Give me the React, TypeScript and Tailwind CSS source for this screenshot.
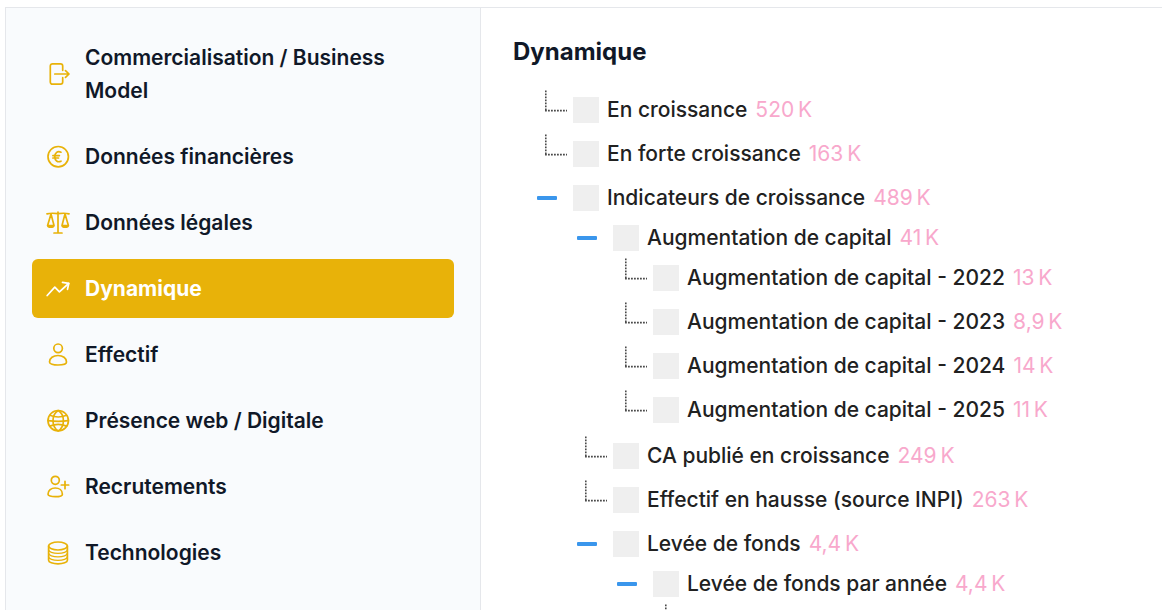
import React, { useState, ReactNode } from 'react';

interface Category {
  id: string;
  label: string;
  icon: ReactNode;
}

interface TreeItem {
  id: string;
  label: string;
  count: string;
  children?: TreeItem[];
  truncated?: boolean;
}

const Icon = ({ children }: { children: ReactNode }) => (
  <svg
    viewBox="0 0.5 24 24"
    className="size-6 shrink-0"
    fill="none"
    stroke="currentColor"
    strokeWidth="1.7"
    strokeLinecap="round"
    strokeLinejoin="round"
    aria-hidden="true"
  >
    {children}
  </svg>
);

const categories: Category[] = [
  {
    id: 'business',
    label: 'Commercialisation / Business Model',
    icon: (
      <Icon>
        <path d="M16.7 8.8V4.500a2.2 2.2 0 0 0-2.2-2.2h-8a2.2 2.2 0 0 0-2.2 2.2v16a2.2 2.2 0 0 0 2.2 2.2h8a2.2 2.2 0 0 0 2.2-2.2v-4.3" />
        <path d="M8.800 12.500h14M19.500 9.200l3.500 3.300-3.500 3.300" />
      </Icon>
    ),
  },
  {
    id: 'finance',
    label: 'Données financières',
    icon: (
      <Icon>
        <circle cx="12.2" cy="12.2" r="10.2" />
        <path d="M15 7.7c-3.400-1.600-6.200.5-6.200 4.500s2.800 6.100 6.200 4.500M6.900 11.100h6.500M6.900 13.500h5.600" />
      </Icon>
    ),
  },
  {
    id: 'legal',
    label: 'Données légales',
    icon: (
      <Icon>
        <path d="M12 1.500v20.500M8 22.500h8M1 3.400c3-.8 6-.9 11-.2 5-.7 8-.6 11 .2" />
        <path d="M5 3.400 1.600 15M5 3.400 8 15M1.600 15c.4 2.200 6 2.200 6.400 0zM19 3.400 16 15M19 3.400 22.400 15M16 15c.4 2.200 6 2.200 6.400 0z" />
      </Icon>
    ),
  },
  {
    id: 'dynamic',
    label: 'Dynamique',
    icon: (
      <Icon>
        <path d="M1.200 19 8.800 10.600l4.600 4.800L22.600 7" />
        <path d="m16.500 5.800 6.300 1-1.300 6" />
      </Icon>
    ),
  },
  {
    id: 'staff',
    label: 'Effectif',
    icon: (
      <Icon>
        <circle cx="12.1" cy="5.800" r="4.300" />
        <path d="M3.500 19.500c0-4 3.800-6.500 8.500-6.500s8.500 2.500 8.500 6.500c0 1.800-3.800 3-8.500 3s-8.500-1.200-8.500-3z" />
      </Icon>
    ),
  },
  {
    id: 'web',
    label: 'Présence web / Digitale',
    icon: (
      <Icon>
        <circle cx="12.2" cy="12.200" r="10.200" />
        <path d="M12.200 2C8 4.500 7 8 7 12.200s1 7.700 5.200 10.200c4.200-2.500 5.200-6 5.200-10.200S16.400 4.500 12.200 2z" />
        <path d="M3.800 6.800c5 2 11.800 2 16.800 0M2 12.200c6 .8 14.400.8 20.400 0M3.800 17.600c5-2 11.800-2 16.800 0" />
      </Icon>
    ),
  },
  {
    id: 'hiring',
    label: 'Recrutements',
    icon: (
      <Icon>
        <circle cx="9.300" cy="5.800" r="4" />
        <path d="M2 19.700c0-3.800 3.200-6.200 7.200-6.200s7.200 2.400 7.200 6.200c0 1.600-3.200 2.500-7.200 2.500S2 21.300 2 19.700zM19 6.800v7.400M15.300 10.500h7.400" />
      </Icon>
    ),
  },
  {
    id: 'tech',
    label: 'Technologies',
    icon: (
      <Icon>
        <ellipse cx="12" cy="5.500" rx="9.400" ry="4" />
        <path d="M2.600 5.500v14.200c0 2 4.200 3.600 9.400 3.600s9.400-1.600 9.400-3.600V5.500" />
        <path d="M2.600 9.300c0 2 4.200 3.600 9.400 3.600s9.400-1.600 9.400-3.600M2.600 12.800c0 2 4.200 3.600 9.400 3.600s9.400-1.600 9.400-3.600M2.600 16.300c0 2 4.200 3.600 9.400 3.600s9.400-1.600 9.400-3.600" strokeWidth="1.400" />
      </Icon>
    ),
  },
];

// Counts use a narrow no-break space before the unit
const tree: TreeItem[] = [
  { id: 'croissance', label: 'En croissance', count: '520\u202fK' },
  { id: 'forte-croissance', label: 'En forte croissance', count: '163\u202fK' },
  {
    id: 'indicateurs',
    label: 'Indicateurs de croissance',
    count: '489\u202fK',
    children: [
      {
        id: 'capital',
        label: 'Augmentation de capital',
        count: '41\u202fK',
        children: [
          { id: 'capital-2022', label: 'Augmentation de capital - 2022', count: '13\u202fK' },
          { id: 'capital-2023', label: 'Augmentation de capital - 2023', count: '8,9\u202fK' },
          { id: 'capital-2024', label: 'Augmentation de capital - 2024', count: '14\u202fK' },
          { id: 'capital-2025', label: 'Augmentation de capital - 2025', count: '11\u202fK' },
        ],
      },
      { id: 'ca', label: 'CA publié en croissance', count: '249\u202fK' },
      { id: 'effectif', label: 'Effectif en hausse (source INPI)', count: '263\u202fK' },
      {
        id: 'fonds',
        label: 'Levée de fonds',
        count: '4,4\u202fK',
        children: [
          { id: 'fonds-annee', label: 'Levée de fonds par année', count: '4,4\u202fK', truncated: true },
        ],
      },
    ],
  },
];

const Connector = () => (
  <svg viewBox="0 0 23 40" className="ml-2 h-10 w-[23px]" fill="none" stroke="#4a4a4a" strokeWidth="1.6" strokeDasharray="1.8 1.2" aria-hidden="true">
    <path d="M0.800 0.400V21" />
    <path d="M0 20.600H22" />
  </svg>
);

const TreeNode = ({ item }: { item: TreeItem }) => {
  const [open, setOpen] = useState(true);
  const isParent = Boolean(item.children) || Boolean(item.truncated);

  return (
    <li>
      <div className={isParent ? 'flex h-10 items-center' : 'mb-1 flex h-10 items-center'}>
        <div className="w-9 shrink-0">
          {isParent ? (
            <button
              type="button"
              aria-expanded={open}
              aria-labelledby={`label-${item.id}`}
              onClick={() => setOpen(!open)}
              className="flex h-5 w-5 items-center"
            >
              <span className="h-1 w-full rounded-[1px] bg-[#3a96ec]" />
            </button>
          ) : (
            <Connector />
          )}
        </div>
        <input id={item.id} type="checkbox" className="size-[26px] shrink-0 appearance-none bg-[#efefef] checked:bg-yellow-500" />
        <label id={`label-${item.id}`} htmlFor={item.id} className="ml-2 text-[21px] font-medium whitespace-nowrap text-[#212121]">
          {item.label}
        </label>
        <span className="ml-2 text-[21px] whitespace-nowrap text-[#f8a8cc]">{item.count}</span>
      </div>
      {open && item.children && (
        <ul className="ml-10 pb-[2px]">
          {item.children.map(child => <TreeNode key={child.id} item={child} />)}
        </ul>
      )}
      {open && item.truncated && (
        <div className="ml-10">
          <Connector />
        </div>
      )}
    </li>
  );
};

const App = () => {
  const [active, setActive] = useState('dynamic');

  return (
    <div className="flex h-screen overflow-hidden bg-white pt-[7px] pl-[5px] font-['Inter',sans-serif]">
      <nav className="w-[476px] shrink-0 border border-b-0 border-gray-200 bg-[#f9fbfd] px-[26px] pt-5">
        <ul className="flex flex-col gap-[7px]">
          {categories.map(category => (
            <li key={category.id}>
              <button
                type="button"
                onClick={() => setActive(category.id)}
                className={
                  active === category.id
                    ? 'flex w-full items-center gap-[15px] rounded-md bg-[#e8b209] px-[14px] py-[13px] text-left text-white'
                    : 'flex w-full items-center gap-[15px] rounded-md px-[14px] py-[13px] text-left text-[#e8b209]'
                }
              >
                {category.icon}
                <span
                  className={
                    active === category.id
                      ? 'text-[21px] leading-[33px] font-bold'
                      : 'text-[21px] leading-[33px] font-semibold text-gray-900'
                  }
                >
                  {category.label}
                </span>
              </button>
            </li>
          ))}
        </ul>
      </nav>
      <main className="min-w-0 flex-1 border-t border-gray-200 pt-[26px] pl-8">
        <h1 className="text-2xl leading-9 font-bold text-gray-900">Dynamique</h1>
        <ul className="mt-5 ml-6">
          {tree.map(item => <TreeNode key={item.id} item={item} />)}
        </ul>
      </main>
    </div>
  );
};

export default App;
